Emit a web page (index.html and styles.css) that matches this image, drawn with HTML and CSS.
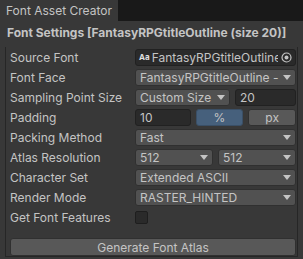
FILE: index.html
```html
<!DOCTYPE html>
<html lang="en">
<head>
    <meta charset="UTF-8">
    <title>Font Asset Creator</title>
    <link rel="stylesheet" href="styles.css">
</head>
<body>
    <div class="tabbar">
        <div class="tab">Font Asset Creator</div>
    </div>

    <div class="section-title">Font Settings [FantasyRPGtitleOutline (size 20)]</div>

    <div class="box">
        <div class="row">
            <div class="label">Source Font</div>
            <div class="object-field">
                <span class="aa">Aa</span>
                <span class="object-name">FantasyRPGtitleOutline</span>
                <svg class="picker" width="11" height="11" viewBox="0 0 11 11">
                    <circle cx="5.5" cy="5.5" r="4.5" fill="none" stroke="#c4c4c4" stroke-width="1.2"/>
                    <circle cx="5.5" cy="5.5" r="2" fill="#c4c4c4"/>
                </svg>
            </div>
        </div>
        <div class="row">
            <div class="label">Font Face</div>
            <div class="dropdown grow"><span>FantasyRPGtitleOutline - </span><i class="arrow"></i></div>
        </div>
        <div class="row">
            <div class="label">Sampling Point Size</div>
            <div class="fields">
                <div class="dropdown size-mode"><span>Custom Size</span><i class="arrow"></i></div>
                <div class="text-field grow">20</div>
            </div>
        </div>
        <div class="row">
            <div class="label">Padding</div>
            <div class="fields">
                <div class="text-field grow">10</div>
                <div class="toggle active grow">%</div>
                <div class="toggle grow">px</div>
            </div>
        </div>
        <div class="row">
            <div class="label">Packing Method</div>
            <div class="dropdown grow"><span>Fast</span><i class="arrow"></i></div>
        </div>
        <div class="row">
            <div class="label">Atlas Resolution</div>
            <div class="fields">
                <div class="dropdown grow"><span>512</span><i class="arrow"></i></div>
                <div class="dropdown grow"><span>512</span><i class="arrow"></i></div>
            </div>
        </div>
        <div class="row">
            <div class="label">Character Set</div>
            <div class="dropdown grow"><span>Extended ASCII</span><i class="arrow"></i></div>
        </div>
        <div class="row">
            <div class="label">Render Mode</div>
            <div class="dropdown grow"><span>RASTER_HINTED</span><i class="arrow"></i></div>
        </div>
        <div class="row">
            <div class="label">Get Font Features</div>
            <div class="checkbox"></div>
        </div>

        <button class="btn-generate">Generate Font Atlas</button>
    </div>
</body>
</html>
```

FILE: styles.css
```css
body {
    margin: 0;
    background: #383838;
    color: #c4c4c4;
    font-family: Inter, "Noto Sans", sans-serif;
    font-size: 12px;
    overflow: hidden;
}
.tabbar {
    height: 21px;
    background: #191919;
    display: flex;
}
.tab {
    width: 118px;
    background: #383838;
    line-height: 21px;
    padding-left: 6px;
    box-sizing: border-box;
    white-space: nowrap;
}
.section-title {
    font-weight: bold;
    line-height: 18px;
    margin-top: 3px;
    padding-left: 7px;
    white-space: nowrap;
}
.box {
    margin: 5px 5px 0 5px;
    padding: 0 1px 0 4px;
    border-left: 1px solid #262626;
    border-right: 1px solid #262626;
    border-bottom: 1px solid #262626;
    height: 209px;
}
.row {
    display: flex;
    align-items: center;
    height: 20px;
}
.label {
    width: 125px;
    flex: none;
    white-space: nowrap;
}
.fields {
    flex: 1;
    display: flex;
    gap: 5px;
}
.grow { flex: 1; }
.dropdown, .text-field, .toggle, .object-field {
    height: 17px;
    box-sizing: border-box;
    border-radius: 3px;
    display: flex;
    align-items: center;
    white-space: nowrap;
    overflow: hidden;
    min-width: 0;
}
.dropdown {
    background: #515151;
    border: 1px solid #303030;
    padding: 0 4px 0 4px;
    justify-content: space-between;
}
.size-mode { width: 95px; flex: none; }
.arrow {
    width: 0;
    height: 0;
    border-left: 4px solid transparent;
    border-right: 4px solid transparent;
    border-top: 5px solid #c4c4c4;
    flex: none;
}
.text-field {
    background: #2a2a2a;
    border: 1px solid #212121;
    padding: 0 4px;
}
.toggle {
    background: #585858;
    border: 1px solid #303030;
    justify-content: center;
}
.toggle.active { background: #46607c; border-color: #3a4f66; }
.object-field {
    flex: 1;
    background: #2a2a2a;
    border: 1px solid #212121;
    padding: 0 3px 0 3px;
}
.aa {
    font-size: 8px;
    font-weight: bold;
    color: #e0e0e0;
    margin-right: 2px;
    flex: none;
}
.object-name {
    flex: 1;
    overflow: hidden;
    min-width: 0;
}
.picker { flex: none; margin-left: 3px; }
.checkbox {
    width: 13px;
    height: 13px;
    box-sizing: border-box;
    background: #2a2a2a;
    border: 1px solid #1e1e1e;
    border-radius: 2px;
}
.btn-generate {
    display: block;
    width: 100%;
    height: 18px;
    margin-top: 11px;
    padding: 0;
    background: #585858;
    border: 1px solid #303030;
    border-radius: 3px;
    color: #c4c4c4;
    font-family: Inter, "Noto Sans", sans-serif;
    font-size: 12px;
}
```
